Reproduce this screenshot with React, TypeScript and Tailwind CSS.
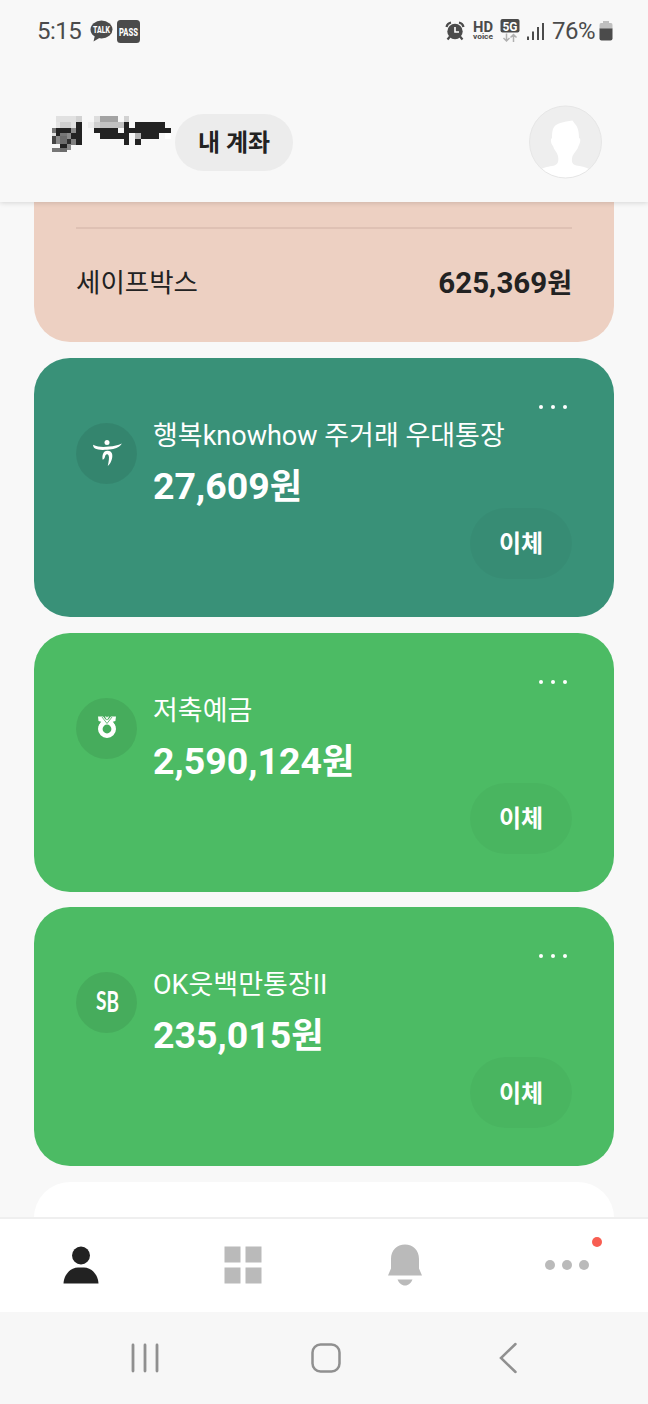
import React from 'react';

interface Account {
  id: string;
  name: string;
  amount: string;
  color: string;
  logo: React.ReactNode;
}

const HanaLogo = () => (
  <svg width="30" height="28" viewBox="0 0 30 28" fill="white">
    <circle cx="15" cy="3.4" r="2.5" />
    <path d="M1 5.800C6 8.400 12 8.200 17 7.600c5-.7 9-1.300 12.800-3.200C28.600 7.400 24 9.600 19.500 10.200 14 11 6 11.400 3 9.600 1.600 8.700 1.200 7.300 1 5.800Z" />
    <path d="M10.700 20.800c-.8-4.500.4-8.900 4.600-9.100 5.200-.2 5.700 4.600 4.600 8.300-.8 3-2 5.300-4.100 7 .9-4.500 1.700-8.600.8-10.600-.8-1.700-2.700-1.200-3.300.4-.5 1.300-.5 3.200-2.600 4Z" />
  </svg>
);

const NonghyupLogo = () => (
  <svg className="-mt-1" width="20" height="24" viewBox="0 0 20 24" fill="none">
    <circle cx="10" cy="15" r="6.700" stroke="white" strokeWidth="4.600" />
    <path d="M1 2.500h5l4 4.500 4-4.500h5l-.6 4.500-2.600.7L18 11 10 10 2 11l2.200-3.300L1.500 7Z" fill="white" />
    <path d="M5 3l5 6.500L15 3" stroke="#46a95c" strokeWidth=".8" />
    <path d="M8.500 2.500l1.500 2.300 1.500-2.300" stroke="white" strokeWidth="1.200" />
  </svg>
);

const SavingsLogo = () => (
  <svg width="30" height="40" viewBox="0 0 30 40" fill="white" fontFamily="Lato, sans-serif" fontWeight="700">
    <text x="4" y="27" fontSize="26" textLength="10.500" lengthAdjust="spacingAndGlyphs">S</text>
    <text x="14.500" y="28.500" fontSize="29" textLength="12.500" lengthAdjust="spacingAndGlyphs">B</text>
  </svg>
);

const ACCOUNTS: Account[] = [
  { id: 'hana', name: '행복knowhow 주거래 우대통장', amount: '27,609', color: 'bg-[#399178]', logo: <HanaLogo /> },
  { id: 'nh', name: '저축예금', amount: '2,590,124', color: 'bg-[#4cbb64]', logo: <NonghyupLogo /> },
  { id: 'sb', name: 'OK읏백만통장II', amount: '235,015', color: 'bg-[#4cbb64]', logo: <SavingsLogo /> },
];

// x, y, width, height, fill
const MASK_BLOCKS: [number, number, number, number, string][] = [
  [4, 0, 20, 6, '#e1e1e1'], [24, 0, 6, 6, '#d2d2d2'],
  [4, 6, 4, 6, '#e4e4e4'], [8, 6, 11, 6, '#cfcfcf'], [19, 6, 5, 6, '#e0e0e0'], [24, 6, 6, 23, '#222222'],
  [0, 12, 4, 5, '#777777'], [4, 12, 15, 5, '#222222'], [19, 12, 5, 5, '#8a8a8a'],
  [0, 17, 4, 3, '#e0e0e0'], [4, 17, 4, 3, '#222222'], [8, 17, 7, 3, '#777777'], [15, 17, 4, 6, '#8a8a8a'], [19, 17, 5, 6, '#222222'],
  [0, 20, 4, 8, '#444444'], [4, 20, 4, 8, '#8a8a8a'], [8, 20, 7, 8, '#6c6c6c'], [15, 23, 4, 6, '#2e2e2e'], [19, 23, 5, 6, '#808080'],
  [8, 28, 7, 4, '#222222'], [15, 28, 4, 6, '#8a8a8a'], [0, 32, 8, 4, '#777777'], [8, 32, 7, 4, '#6c6c6c'],
  [42, 0, 6, 6, '#dedede'], [48, 0, 18, 6, '#a3a3a3'], [72, 0, 5, 6, '#d2d2d2'],
  [36, 6, 6, 6, '#eeeeee'], [42, 6, 6, 6, '#d0d0d0'], [48, 6, 24, 6, '#c1c1c1'], [72, 6, 5, 23, '#222222'],
  [42, 12, 24, 5, '#222222'], [48, 17, 24, 6, '#222222'], [77, 12, 6, 5, '#222222'],
  [83, 6, 30, 17, '#222222'], [113, 12, 6, 5, '#222222'], [83, 17, 6, 6, '#b4b4b4'],
  [83, 23, 6, 6, '#222222'], [107, 17, 6, 6, '#f8f8f8'], [113, 17, 6, 6, '#ffffff'],
];

const StatusBar = () => (
  <div className="flex h-[62px] items-center justify-between pl-[37px] pr-[35px] text-[#4b4b4b]">
    <div className="flex items-center">
      <span className="w-[53px] text-[24px] leading-none tracking-[-0.5px]">5:15</span>
      <svg width="23" height="22" viewBox="0 0 23 22">
        <ellipse cx="11.500" cy="9.500" rx="11" ry="9" fill="#4b4b4b" />
        <path d="M5 15l-1.500 6.500L11 17Z" fill="#4b4b4b" />
        <text x="3" y="12.500" fontSize="8.500" fontWeight="800" fill="white" textLength="17" lengthAdjust="spacingAndGlyphs">TALK</text>
      </svg>
      <svg className="ml-1" width="23" height="23" viewBox="0 0 23 23">
        <rect width="23" height="23" rx="3.500" fill="#4b4b4b" />
        <text x="2" y="15.700" fontSize="11" fontWeight="800" fill="white" textLength="19" lengthAdjust="spacingAndGlyphs">PASS</text>
      </svg>
    </div>
    <div className="flex items-center">
      <svg className="mr-[7px]" width="20" height="20" viewBox="0 0 20 20" fill="none">
        <circle cx="10" cy="10.500" r="7.700" fill="#4b4b4b" />
        <path d="M1.500 6C2 3.500 3.500 2 6 1.500M18.500 6C18 3.500 16.500 2 14 1.500M5 15.500l-2.500 3M15 15.500l2.500 3" stroke="#4b4b4b" strokeWidth="2.200" />
        <path d="M10 6v5h4" stroke="white" strokeWidth="1.600" />
      </svg>
      <svg className="mr-[6px]" width="22" height="26" viewBox="0 0 22 26" fill="#4b4b4b" fontWeight="700">
        <text x="1" y="14" fontSize="14.500" textLength="20" lengthAdjust="spacingAndGlyphs">HD</text>
        <text x="1" y="20.500" fontSize="8" textLength="20" lengthAdjust="spacingAndGlyphs">voice</text>
      </svg>
      <svg className="mr-[7px]" width="20" height="24" viewBox="0 0 20 24">
        <rect x=".5" y="0" width="19" height="13.500" rx="2" fill="#4b4b4b" />
        <text x="2.500" y="11.500" fontSize="13" fontWeight="700" fill="white" textLength="15" lengthAdjust="spacingAndGlyphs">5G</text>
        <path d="M6.500 14.500v7.500M3.500 19l3 3 3-3M13.500 23v-7.500M10.500 18.500l3-3 3 3" fill="none" stroke="#b0b0b0" strokeWidth="1.500" />
      </svg>
      <svg className="mr-2" width="18" height="20" viewBox="0 0 18 20" fill="#4b4b4b">
        <rect x="0" y="15.500" width="2" height="3.500" />
        <rect x="5" y="10.500" width="2" height="8.500" />
        <rect x="10" y="6" width="2" height="13" />
        <rect x="15" y="2" width="2" height="17" />
      </svg>
      <span className="-ml-px w-[47px] text-[24px] leading-none tracking-[-0.5px]">76%</span>
      <svg width="14" height="20" viewBox="0 0 14 20">
        <path d="M4 0h6v2h2q1.500 0 1.500 2v4H.5V4Q.5 2 2 2h2Z" fill="#c0c0c0" />
        <path d="M.5 7.500h13v10q0 2-2 2h-9q-2 0-2-2Z" fill="#4b4b4b" />
      </svg>
    </div>
  </div>
);

const Header = () => (
  <div className="flex h-[140px] items-center justify-between pl-[52px] pr-[46px] pt-5">
    <div className="flex items-center">
      <svg className="-mt-4 mr-1" width="119" height="36" viewBox="0 0 119 36" shapeRendering="crispEdges">
        {MASK_BLOCKS.map(([x, y, w, h, fill], i) => (
          <rect key={i} x={x} y={y} width={w} height={h} fill={fill} />
        ))}
      </svg>
      <button className="h-[57px] w-[118px] rounded-full bg-[#ececec] pt-[2px] text-[24px] font-bold text-[#222]">
        내 계좌
      </button>
    </div>
    <svg width="73" height="74" viewBox="0 0 73 74">
      <defs>
        <clipPath id="avatar"><circle cx="36.500" cy="37" r="36" /></clipPath>
      </defs>
      <circle cx="36.500" cy="37" r="36" fill="#eeeeee" />
      <g clipPath="url(#avatar)">
        <path d="M24 24C26 18 35 17 43.500 15.500L46 19C49 22 50 27 50 33c2 0 1.500 5-.5 8-1 4-4 6-6 10-2 8 1 9 7 10 5 1 9 2 12 5v10H10V66c4-4 8-4 13-5 6-1 7-4 6-10-1-4-4-6-5-10-2-2-3-7-1-8 0-3 0-6 1-9Z" fill="white" />
      </g>
      <circle cx="36.500" cy="37" r="36" fill="none" stroke="#e6e6e6" />
    </svg>
  </div>
);

const SafeBoxCard = () => (
  <div className="h-[140px] shrink-0 rounded-b-[36px] bg-[#edd0c2] px-[42px] pt-[25px]">
    <div className="h-0.5 bg-[#dfc1b4]" />
    <div className="flex h-[108px] items-center justify-between text-[#222]">
      <span className="text-[26.500px]">세이프박스</span>
      <span className="text-[29.500px] font-bold">
        625,369<span className="text-[27px]">원</span>
      </span>
    </div>
  </div>
);

const AccountCard: React.FC<{ account: Account }> = ({ account }) => (
  <div className={`flex h-[259px] shrink-0 flex-col rounded-[36px] px-[42px] text-white ${account.color}`}>
    <button className="mr-[5px] mt-[47px] flex h-1 gap-2 self-end" title="더보기">
      <span className="size-1 rounded-full bg-white" />
      <span className="size-1 rounded-full bg-white" />
      <span className="size-1 rounded-full bg-white" />
    </button>
    <div className="mt-2 flex h-[91px]">
      <div className="mr-4 mt-[6px] flex size-[61px] shrink-0 items-center justify-center rounded-full bg-black/8">
        {account.logo}
      </div>
      <div className="whitespace-nowrap">
        <div className="h-[38px] text-[27px] leading-[38px]">{account.name}</div>
        <div className="h-[62px] text-[37.500px] font-bold leading-[63px]">
          {account.amount}<span className="text-[35px]">원</span>
        </div>
      </div>
    </div>
    <button className="h-[71px] w-[102px] self-end rounded-full bg-black/3 pt-[2px] text-[24px] font-bold">이체</button>
  </div>
);

const TabBar = () => (
  <div className="grid h-[95px] grid-cols-4 items-center justify-items-center border-t-2 border-[#efefef] bg-white pb-[2px]">
    <svg width="36" height="40" viewBox="0 0 36 40" fill="#222">
      <circle cx="18" cy="10.500" r="9" />
      <path d="M.5 38.500C1 29 8 22.500 15 22.500h6c7 0 14 6.500 14.500 16Z" />
    </svg>
    <svg width="38" height="38" viewBox="0 0 38 38" fill="#bababa">
      <rect x=".5" y=".5" width="16" height="16" />
      <rect x="21.500" y=".5" width="16" height="16" />
      <rect x=".5" y="21.500" width="16" height="16" />
      <rect x="21.500" y="21.500" width="16" height="16" />
    </svg>
    <svg width="34" height="42" viewBox="0 0 34 42" fill="#bababa">
      <path d="M3 15C3 6 9 .5 17 .5S31 6 31 15v9.500l3 7H0l3-7Z" />
      <path d="M9.500 35.500h15c-1.500 3.500-4 6-7.500 6s-6-2.500-7.500-6Z" />
    </svg>
    <div className="relative flex gap-[7px]">
      <span className="size-[10px] rounded-full bg-[#bababa]" />
      <span className="size-[10px] rounded-full bg-[#bababa]" />
      <span className="size-[10px] rounded-full bg-[#bababa]" />
      <span className="absolute -right-[13px] -top-[23px] size-[10px] rounded-full bg-[#f85e52]" />
    </div>
  </div>
);

const NavigationBar = () => (
  <div className="flex h-[92px] items-center justify-between bg-[#f7f7f7] px-[131px]">
    <svg width="28" height="30" viewBox="0 0 28 30" stroke="#909090" strokeWidth="2.800" strokeLinecap="round">
      <path d="M2 2v26M14 2v26M26 2v26" />
    </svg>
    <svg className="-ml-[6px]" width="30" height="30" viewBox="0 0 30 30" fill="none" stroke="#909090" strokeWidth="2.500">
      <rect x="1.500" y="1.500" width="27" height="27" rx="8" />
    </svg>
    <svg width="18" height="32" viewBox="0 0 18 32" fill="none" stroke="#909090" strokeWidth="2.500" strokeLinecap="round">
      <path d="M16.500 2L2 16l14.500 14" />
    </svg>
  </div>
);

export default function App() {
  return (
    <div className="flex h-[1404px] w-[648px] flex-col overflow-hidden bg-[#f8f8f8] font-[Roboto,'Noto_Sans_CJK_KR',sans-serif]">
      <header className="relative z-10 h-[202px] shrink-0 bg-[#f8f8f8] shadow-[0_1px_5px_rgba(0,0,0,0.14)]">
        <StatusBar />
        <Header />
      </header>
      <main className="flex h-[1015px] shrink-0 flex-col gap-[15.800px] overflow-hidden px-[34px]">
        <SafeBoxCard />
        {ACCOUNTS.map((account) => (
          <AccountCard key={account.id} account={account} />
        ))}
        <div className="h-[259px] shrink-0 rounded-[36px] bg-white" />
      </main>
      <TabBar />
      <NavigationBar />
    </div>
  );
}
